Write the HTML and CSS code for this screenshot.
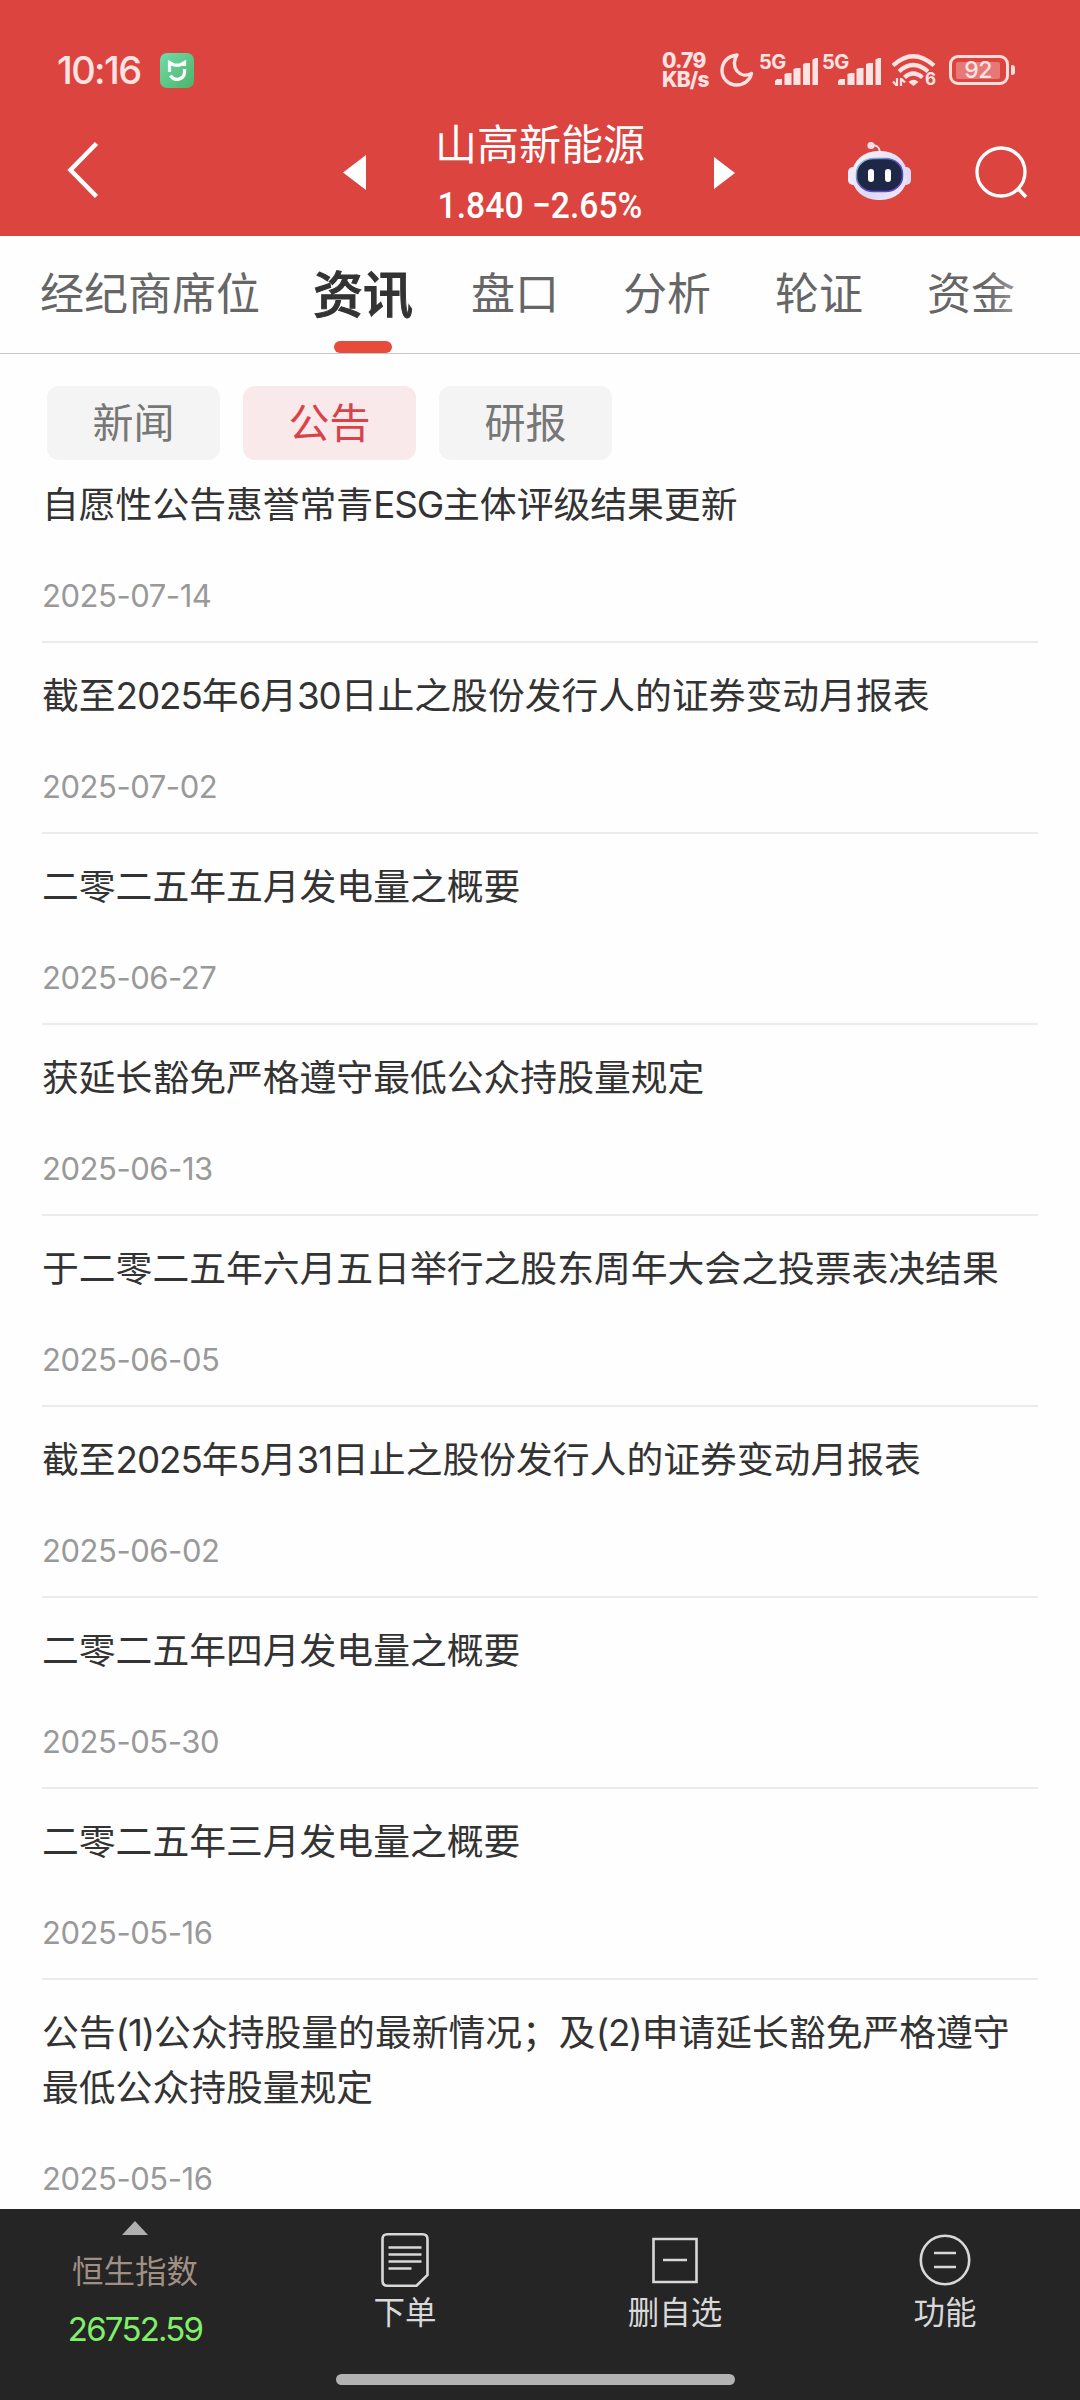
FILE: index.html
```html
<!DOCTYPE html>
<html lang="zh-CN">
<head>
    <meta charset="UTF-8">
    <meta name="viewport" content="width=device-width, initial-scale=1.0">
    <title>山高新能源</title>
    <link rel="stylesheet" href="styles.css">
</head>
<body>

    <header class="header">
        <!-- Status bar -->
        <div class="status-bar">
            <span class="clock">10:16</span>
            <svg class="app-icon" width="34" height="35" viewBox="0 0 34 35">
                <defs>
                    <linearGradient id="appGreen" x1="0" y1="0" x2="1" y2="1">
                        <stop offset="0" stop-color="#6fdcab"/>
                        <stop offset="1" stop-color="#4fb268"/>
                    </linearGradient>
                </defs>
                <rect width="34" height="35" rx="7" fill="url(#appGreen)"/>
                <path d="M9.500 19V9.500l4 2.200q3.500 1 7 0l4-2.200V13M24.500 16v3.500a7.500 7.500 0 0 1-14 3" fill="none" stroke="#fff" stroke-width="3.200"/>
            </svg>
            <div class="net-speed"><span>0.79</span><span>KB/s</span></div>
            <svg class="moon" width="34" height="34" viewBox="0 0 34 34">
                <path d="M17 2C8 3 2 9 2 17.500A14.500 14.500 0 0 0 16.500 32C24 32 30 27.500 31.500 20.500C26 23.500 20.500 22 17 18C13.500 13.500 13.500 7 17 2Z" fill="none" stroke="#ffe3e2" stroke-width="3.400" stroke-linejoin="round"/>
            </svg>
            <div class="signal">
                <span class="signal-type">5G</span>
                <svg width="43" height="27" viewBox="0 0 43 27">
                    <path d="M0 27v-4l2-2h5v6zM9.500 27V16l3-1h4v12zM18.500 27V11l3-1h4v17zM28 27V6l3-1h4v22zM37.500 27V1.500L40.500 0H43v27z"/>
                </svg>
            </div>
            <div class="signal">
                <span class="signal-type">5G</span>
                <svg width="43" height="27" viewBox="0 0 43 27">
                    <path d="M0 27v-4l2-2h5v6zM9.500 27V16l3-1h4v12zM18.500 27V11l3-1h4v17zM28 27V6l3-1h4v22zM37.500 27V1.500L40.500 0H43v27z"/>
                </svg>
            </div>
            <div class="wifi">
                <svg width="44" height="32" viewBox="0 0 44 32">
                    <g fill="none" stroke="#ffe3e2" stroke-width="4.200">
                        <path d="M1 11.500Q21 -7 42 11.500"/>
                        <path d="M7 17.500Q21 4.500 36 17.500"/>
                        <path d="M12.500 23.500Q21 15.500 30.500 23.500"/>
                    </g>
                    <path d="M16.500 28q5-4.500 10 0l-5 4z" fill="#ffe3e2"/>
                    <path d="M5 24v8M1 27.500l4 4.500M9 32v-8M9 24.500l4 4" fill="none" stroke="#ffe3e2" stroke-width="2.200"/>
                </svg>
                <span class="wifi-gen">6</span>
            </div>
            <div class="battery"><span class="battery-level">92</span></div>
        </div>

        <!-- Stock title -->
        <div class="nav">
            <svg class="back" width="34" height="60" viewBox="0 0 34 60">
                <path d="M30.500 3.500L4.500 30L30.500 56.500" fill="none" stroke="#fff" stroke-width="4.500"/>
            </svg>
            <svg class="prev" width="23" height="35" viewBox="0 0 23 35"><path d="M0 17.500L23 0v35z" fill="#fff"/></svg>
            <div class="stock">
                <div class="stock-name">山高新能源</div>
                <div class="stock-price">1.840 −2.65%</div>
            </div>
            <svg class="next" width="21" height="32" viewBox="0 0 21 32"><path d="M21 16L0 0v32z" fill="#fff"/></svg>
            <svg class="robot" width="64" height="60" viewBox="0 0 64 60">
                <defs>
                    <linearGradient id="shell" x1="0" y1="0" x2="1" y2="1">
                        <stop offset="0" stop-color="#fff5f7"/>
                        <stop offset="0.600" stop-color="#dcd9f6"/>
                        <stop offset="1" stop-color="#f4ecfb"/>
                    </linearGradient>
                    <linearGradient id="rim" x1="0" y1="0" x2="1" y2="1">
                        <stop offset="0" stop-color="#8fdcea"/>
                        <stop offset="0.500" stop-color="#5a50b8"/>
                        <stop offset="1" stop-color="#5b3fd0"/>
                    </linearGradient>
                </defs>
                <path d="M23 5q8-2 9 6" fill="none" stroke="#f3dfe8" stroke-width="2"/>
                <circle cx="23" cy="4.500" r="3.600" fill="#f4dfe8"/>
                <rect x="0" y="26" width="12" height="18" rx="5" fill="#eeeafa"/>
                <rect x="51" y="26" width="12" height="18" rx="5" fill="#dcdcf8"/>
                <rect x="4" y="10" width="55" height="49" rx="26" ry="23" fill="url(#shell)"/>
                <rect x="8.500" y="17.500" width="46" height="33" rx="17" ry="15" fill="#1f2747" stroke="url(#rim)" stroke-width="1.500"/>
                <rect x="20" y="28" width="6" height="13" rx="3" fill="#fff"/>
                <rect x="37" y="28" width="6" height="13" rx="3" fill="#fff"/>
            </svg>
            <svg class="search" width="54" height="54" viewBox="0 0 54 54">
                <circle cx="26" cy="27" r="24" fill="none" stroke="#fff" stroke-width="3.300"/>
                <path d="M43 43.500L51 52" fill="none" stroke="#fff" stroke-width="3.600"/>
            </svg>
        </div>
    </header>

    <nav class="tabs">
        <span class="tab">经纪商席位</span>
        <span class="tab active">资讯</span>
        <span class="tab">盘口</span>
        <span class="tab">分析</span>
        <span class="tab">轮证</span>
        <span class="tab">资金</span>
    </nav>

    <main class="content">
        <div class="chips">
            <span class="chip">新闻</span>
            <span class="chip selected">公告</span>
            <span class="chip">研报</span>
        </div>

        <!-- Announcements -->
        <div class="news-list">
            <div class="news">
                <div class="news-title">自愿性公告惠誉常青<span class="latin">ESG</span>主体评级结果更新</div>
                <div class="news-date">2025-07-14</div>
            </div>
            <div class="news">
                <div class="news-title">截至<span class="latin">2025</span>年<span class="latin">6</span>月<span class="latin">30</span>日止之股份发行人的证券变动月报表</div>
                <div class="news-date">2025-07-02</div>
            </div>
            <div class="news">
                <div class="news-title">二零二五年五月发电量之概要</div>
                <div class="news-date">2025-06-27</div>
            </div>
            <div class="news">
                <div class="news-title">获延长豁免严格遵守最低公众持股量规定</div>
                <div class="news-date">2025-06-13</div>
            </div>
            <div class="news">
                <div class="news-title">于二零二五年六月五日举行之股东周年大会之投票表决结果</div>
                <div class="news-date">2025-06-05</div>
            </div>
            <div class="news">
                <div class="news-title">截至<span class="latin">2025</span>年<span class="latin">5</span>月<span class="latin">31</span>日止之股份发行人的证券变动月报表</div>
                <div class="news-date">2025-06-02</div>
            </div>
            <div class="news">
                <div class="news-title">二零二五年四月发电量之概要</div>
                <div class="news-date">2025-05-30</div>
            </div>
            <div class="news">
                <div class="news-title">二零二五年三月发电量之概要</div>
                <div class="news-date">2025-05-16</div>
            </div>
            <div class="news">
                <div class="news-title">公告<span class="latin">(1)</span>公众持股量的最新情况；及<span class="latin">(2)</span>申请延长豁免严格遵守<br>最低公众持股量规定</div>
                <div class="news-date">2025-05-16</div>
            </div>
        </div>
    </main>

    <footer class="footer">
        <div class="footer-items">
            <div class="index">
                <svg width="26" height="14" viewBox="0 0 26 14"><path d="M13 0L26 14H0z" fill="#b0b0b0"/></svg>
                <span class="index-name">恒生指数</span>
                <span class="index-value">26752.59</span>
            </div>
            <div class="action">
                <svg width="56" height="56" viewBox="0 0 56 56">
                    <path d="M10.500 2.200h35q5 0 5 5V43L39.500 53.800h-29q-5 0-5-5V7.200q0-5 5-5z"/>
                    <path d="M11.500 15.500h33M11.500 22.500h33M11.500 29.500h33M11.500 36.500h23"/>
                </svg>
                <span>下单</span>
            </div>
            <div class="action">
                <svg width="56" height="56" viewBox="0 0 56 56">
                    <path d="M6.500 7h43v43h-43zM16 28h24"/>
                </svg>
                <span>删自选</span>
            </div>
            <div class="action">
                <svg width="56" height="56" viewBox="0 0 56 56">
                    <circle cx="28" cy="28" r="24.200"/>
                    <path d="M17 21h22M17 35h22"/>
                </svg>
                <span>功能</span>
            </div>
        </div>
        <div class="home-bar"></div>
    </footer>

</body>
</html>
```
FILE: styles.css
```css
* {
    box-sizing: border-box;
}

body {
    margin: 0;
    width: 1080px;
    height: 2400px;
    overflow: hidden;
    display: flex;
    flex-direction: column;
    background-color: #fefefe;
    font-family: "Noto Sans CJK SC", sans-serif;
    color: #333;
}

svg {
    display: block;
    flex-shrink: 0;
}

/* Header */
.header {
    height: 236px;
    flex-shrink: 0;
    background-color: #dc4440;
    color: #fff;
}

.status-bar {
    height: 104px;
    padding: 36px 65px 0 57px;
    display: flex;
    align-items: center;
    color: #ffe3e2;
    font-family: Inter, sans-serif;
}

.clock {
    width: 103px;
    font-size: 38px;
    font-weight: 500;
    letter-spacing: -1.6px;
    white-space: nowrap;
}

.app-icon {
    margin-right: 468px;
}

.net-speed {
    width: 58px;
    display: flex;
    flex-direction: column;
    font-size: 21px;
    font-weight: 800;
    line-height: 19px;
    letter-spacing: -0.8px;
}

.moon {
    margin-right: 6px;
}

.signal {
    position: relative;
    width: 63px;
    height: 30px;
    padding: 3px 0 0 15px;
    fill: #ffe3e2;
}

.signal-type {
    position: absolute;
    left: -1px;
    top: -1px;
    font-size: 20px;
    font-weight: 700;
    line-height: 16px;
    letter-spacing: -0.5px;
}

.wifi {
    position: relative;
    margin: 0 13px 0 6px;
}

.wifi-gen {
    position: absolute;
    right: 0;
    bottom: -2px;
    font-size: 17px;
    font-weight: 700;
    line-height: 17px;
}

.battery {
    position: relative;
    width: 60px;
    height: 30px;
    padding: 4px 6px 4px 4px;
    border: 3px solid #ffdddb;
    border-radius: 9px;
}

.battery::after {
    content: "";
    position: absolute;
    right: -9px;
    top: 7px;
    width: 4px;
    height: 10px;
    border-radius: 1px 3px 3px 1px;
    background-color: #ffdddb;
}

.battery-level {
    display: block;
    height: 17px;
    border-radius: 2px;
    background-color: #e87875;
    font-size: 23px;
    font-weight: 500;
    line-height: 17px;
    text-align: center;
    letter-spacing: -0.5px;
}

.nav {
    height: 132px;
    padding-left: 66px;
    display: flex;
    align-items: flex-start;
}

.back {
    margin-top: 36px;
}

.prev {
    margin: 51px 0 0 243px;
}

.stock {
    width: 348px;
    text-align: center;
    white-space: nowrap;
}

.stock-name {
    margin-top: 13px;
    font-size: 42px;
    line-height: 50px;
}

.stock-price {
    margin-top: 19px;
    font-family: Roboto, sans-serif;
    font-size: 37px;
    font-weight: 500;
    line-height: 40px;
    transform: scaleX(0.91);
}

.next {
    margin-top: 53px;
}

.robot {
    margin: 37px 0 0 113px;
}

.search {
    margin: 41px 0 0 63px;
}

/* Tabs */
.tabs {
    position: relative;
    height: 118px;
    flex-shrink: 0;
    padding-left: 40px;
    display: flex;
    gap: 64px;
    border-bottom: 1px solid #c4c8c8;
    white-space: nowrap;
}

.tabs::after {
    content: "";
    position: absolute;
    right: 0;
    top: 0;
    width: 96px;
    height: 117px;
    background: linear-gradient(to right, rgba(254, 254, 254, 0), #fefefe 96px);
}

.tab {
    font-size: 44px;
    line-height: 111px;
    color: #666;
}

.tab.active {
    position: relative;
    margin: 0 -6px 0 -11px;
    font-size: 50px;
    font-weight: 500;
    line-height: 110px;
    -webkit-text-stroke: 1px #333;
    color: #333;
}

.tab.active::after {
    content: "";
    position: absolute;
    left: 21px;
    bottom: 0;
    width: 58px;
    height: 12px;
    border-radius: 6px;
    background-color: #e64b3c;
}

/* Content */
.content {
    flex: 1;
    min-height: 0;
    overflow: hidden;
    padding: 32px 42px 0;
}

.chips {
    display: flex;
    gap: 23px;
    padding-left: 5px;
}

.chip {
    width: 173px;
    height: 74px;
    border-radius: 12px;
    background-color: #f4f4f4;
    color: #777;
    font-size: 41px;
    line-height: 68px;
    text-align: center;
}

.chip.selected {
    background-color: #fae9ea;
    color: #d8434a;
}

.news-list {
    margin-top: -8px;
}

.news {
    padding: 23px 0 25px;
    border-bottom: 2px solid #ebebeb;
}

.news-title {
    font-size: 36.8px;
    line-height: 55px;
    white-space: nowrap;
}

.latin {
    font-family: Inter, sans-serif;
    line-height: 1;
    letter-spacing: -1.1px;
}

.news-date {
    margin-top: 46px;
    font-family: Inter, sans-serif;
    font-size: 31px;
    line-height: 40px;
    letter-spacing: -0.45px;
    color: #999;
}

/* Bottom bar */
.footer {
    height: 191px;
    flex-shrink: 0;
    background-color: #252525;
}

.footer-items {
    height: 165px;
    display: grid;
    grid-template-columns: repeat(4, 1fr);
}

.index,
.action {
    display: flex;
    flex-direction: column;
    align-items: center;
}

.index {
    padding-top: 12px;
}

.index-name {
    margin-top: 14px;
    font-size: 31.5px;
    line-height: 40px;
    color: #a09084;
}

.index-value {
    margin-top: 20px;
    font-family: Inter, sans-serif;
    font-size: 33px;
    line-height: 40px;
    letter-spacing: -1.8px;
    color: #80f068;
}

.action {
    padding-top: 23px;
    font-size: 31.5px;
    line-height: 40px;
    color: #d8d8d8;
}

.action svg {
    margin-bottom: 2px;
    fill: none;
    stroke: #d8d8d8;
    stroke-width: 2.600;
}

.home-bar {
    width: 399px;
    height: 11px;
    margin-left: 336px;
    border-radius: 6px;
    background-color: #b2b2b2;
}
```
